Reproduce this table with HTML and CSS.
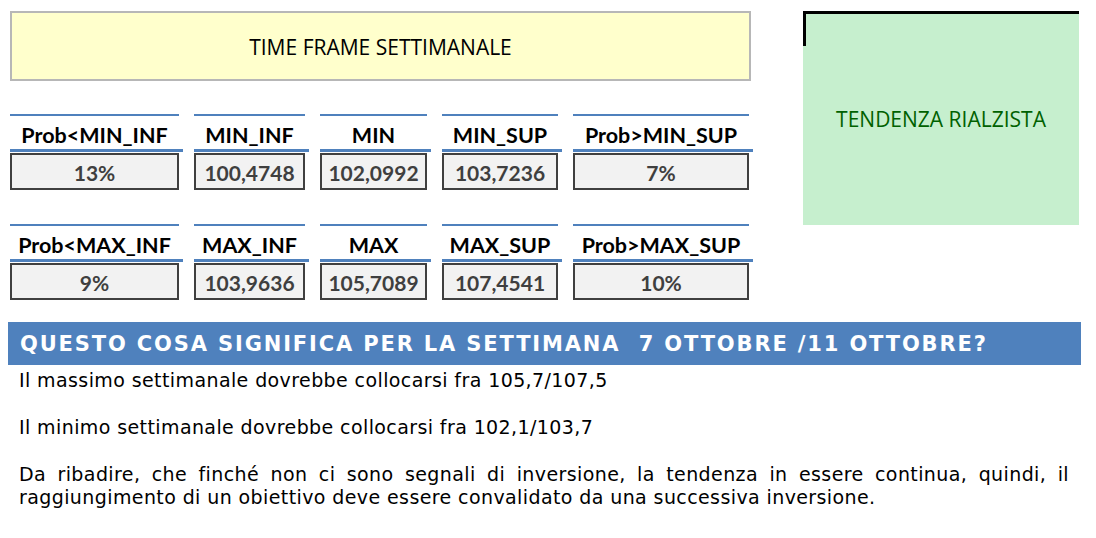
FILE: index.html
```html
<!DOCTYPE html>
<html lang="it">
<head>
<meta charset="utf-8">
<title>Time frame settimanale</title>
<link rel="stylesheet" href="styles.css">
</head>
<body>
<div class="top">
  <div class="left">
    <div class="timeframe">TIME FRAME SETTIMANALE</div>
    <div class="stats">
      <div class="stat c1"><div class="hd">Prob&lt;MIN_INF</div><div class="rule"></div><div class="val">13%</div></div>
      <div class="stat c2"><div class="hd">MIN_INF</div><div class="rule"></div><div class="val">100,4748</div></div>
      <div class="stat c3"><div class="hd">MIN</div><div class="rule"></div><div class="val">102,0992</div></div>
      <div class="stat c4"><div class="hd">MIN_SUP</div><div class="rule"></div><div class="val">103,7236</div></div>
      <div class="stat c5"><div class="hd">Prob&gt;MIN_SUP</div><div class="rule"></div><div class="val">7%</div></div>
    </div>
    <div class="stats second">
      <div class="stat c1"><div class="hd">Prob&lt;MAX_INF</div><div class="rule"></div><div class="val">9%</div></div>
      <div class="stat c2"><div class="hd">MAX_INF</div><div class="rule"></div><div class="val">103,9636</div></div>
      <div class="stat c3"><div class="hd">MAX</div><div class="rule"></div><div class="val">105,7089</div></div>
      <div class="stat c4"><div class="hd">MAX_SUP</div><div class="rule"></div><div class="val">107,4541</div></div>
      <div class="stat c5"><div class="hd">Prob&gt;MAX_SUP</div><div class="rule"></div><div class="val">10%</div></div>
    </div>
  </div>
  <div class="trend">TENDENZA RIALZISTA</div>
</div>
<div class="banner">QUESTO COSA SIGNIFICA PER LA SETTIMANA&nbsp; 7 OTTOBRE /11 OTTOBRE?</div>
<div class="text">
  <p>Il massimo settimanale dovrebbe collocarsi fra 105,7/107,5</p>
  <p>Il minimo settimanale dovrebbe collocarsi fra 102,1/103,7</p>
  <p class="just">Da ribadire, che finché non ci sono segnali di inversione, la tendenza in essere continua, quindi, il raggiungimento di un obiettivo deve essere convalidato da una successiva inversione.</p>
</div>
</body>
</html>
```
FILE: styles.css
```css
html, body {
  margin: 0;
  padding: 0;
  background: #ffffff;
}
body {
  width: 1096px;
  font-family: "DejaVu Sans", Verdana, sans-serif;
  color: #000;
}
.top {
  display: flex;
  padding: 11px 0 0 10px;
  align-items: flex-start;
}
.left {
  width: 741px;
}
.timeframe {
  box-sizing: border-box;
  height: 70px;
  border: 2px solid #b7b7b7;
  background: #ffffcc;
  display: flex;
  align-items: center;
  justify-content: center;
  font-family: "Open Sans", Lato, sans-serif;
  font-size: 21px;
  color: #000;
  padding-top: 2px;
}
.stats {
  display: flex;
  gap: 15px;
  margin-top: 33px;
}
.stats.second {
  margin-top: 34px;
}
.stat {
  display: flex;
  flex-direction: column;
}
.c1 { width: 169px; }
.c2 { width: 111px; }
.c3 { width: 107px; }
.c4 { width: 116px; }
.c5 { width: 176px; }
.hd {
  box-sizing: border-box;
  height: 35px;
  border-top: 2px solid #4f81bd;
  display: flex;
  align-items: center;
  justify-content: center;
  padding-top: 4px;
  font-family: Lato, "Open Sans", sans-serif;
  font-weight: 700;
  font-size: 21.5px;
  color: #000;
  white-space: nowrap;
}
.rule {
  height: 3px;
  background: #4f81bd;
  margin-right: -4px;
  margin-bottom: 1px;
}
.val {
  box-sizing: border-box;
  height: 37px;
  border: 2px solid #404040;
  background: #f2f2f2;
  display: flex;
  align-items: center;
  justify-content: center;
  font-family: Lato, "Open Sans", sans-serif;
  font-weight: 700;
  font-size: 21px;
  color: #3f3f3f;
  padding-top: 1px;
}
.trend {
  position: relative;
  box-sizing: border-box;
  margin-left: 52px;
  width: 276px;
  height: 214px;
  background: #c6efce;
  border-top: 3px solid #000;
  display: flex;
  align-items: center;
  justify-content: center;
  font-family: "Open Sans", Lato, sans-serif;
  font-size: 21px;
  color: #006100;
  padding-bottom: 2px;
}
.trend::before {
  content: "";
  position: absolute;
  left: 0;
  top: -3px;
  width: 3px;
  height: 35px;
  background: #000;
}
.banner {
  box-sizing: border-box;
  margin: 22px 0 0 8px;
  width: 1073px;
  height: 43px;
  background: #4f81bd;
  color: #fff;
  font-family: "DejaVu Sans", Verdana, sans-serif;
  font-weight: 700;
  font-size: 21px;
  letter-spacing: 1.85px;
  padding-left: 12px;
  display: flex;
  align-items: center;
  white-space: nowrap;
}
.text {
  padding: 4px 0 0 19px;
  width: 1050px;
  font-size: 19px;
  letter-spacing: 0.4px;
  line-height: 23px;
}
.text p {
  margin: 0 0 24px 0;
}
.text p.just {
  text-align: justify;
}
```
